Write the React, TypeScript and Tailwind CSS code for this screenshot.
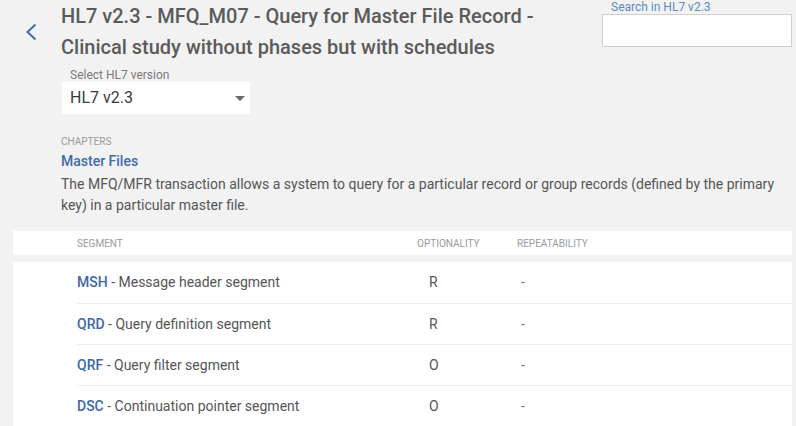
import { useState } from 'react';

type Segment = {
  code: string;
  name: string;
  optionality: string;
  repeatability: string;
};

const segments: Segment[] = [
  { code: 'MSH', name: 'Message header segment', optionality: 'R', repeatability: '-' },
  { code: 'QRD', name: 'Query definition segment', optionality: 'R', repeatability: '-' },
  { code: 'QRF', name: 'Query filter segment', optionality: 'O', repeatability: '-' },
  { code: 'DSC', name: 'Continuation pointer segment', optionality: 'O', repeatability: '-' },
];

export default function App() {
  const [version, setVersion] = useState('HL7 v2.3');
  const [query, setQuery] = useState('');

  return (
    <main className="min-h-screen w-full bg-[#f2f2f2] font-['Roboto',sans-serif] text-[#555]">
      <header className="flex items-start">
        <button className="ml-[25px] mt-[23px] w-[36px] shrink-0 text-[#3b6fb1]">
          <svg width="13" height="18" viewBox="0 0 13 18" fill="none">
            <path d="M10.5 1.5 L2.5 9 L10.5 16.5" stroke="currentColor" strokeWidth="2" />
          </svg>
        </button>

        <div className="w-[530px] shrink-0">
          <h1 className="pt-[1px] text-[20px] font-medium leading-[31px] text-[#5b5b5b]">
            HL7 v2.3 - MFQ_M07 - Query for Master File Record - Clinical study without phases but with schedules
          </h1>

          <div className="mt-[5px] ml-[1px]">
            <label className="block pl-[8px] text-[12px] leading-[14px] text-[#7a7a7a]">Select HL7 version</label>
            <div className="relative flex h-[32px] w-[188px] items-center bg-white pl-[8px]">
              <select
                value={version}
                onChange={(event) => setVersion(event.target.value)}
                className="w-full appearance-none bg-transparent text-[16px] text-[#3a3a3a] outline-none"
              >
                <option>HL7 v2.3</option>
                <option>HL7 v2.4</option>
                <option>HL7 v2.5</option>
              </select>
              <span className="pointer-events-none absolute right-[5px] top-[14px] h-0 w-0 border-x-[5px] border-t-[5px] border-x-transparent border-t-[#666]" />
            </div>
          </div>
        </div>

        <div className="ml-auto mr-[4px] w-[190px] pt-[1px]">
          <label className="block pl-[9px] text-[12px] leading-[13px] text-[#5a8ac8]">Search in HL7 v2.3</label>
          <input
            type="text"
            value={query}
            onChange={(event) => setQuery(event.target.value)}
            className="h-[33px] w-full border border-[#cfcfcf] bg-white px-2 text-[14px] outline-none"
          />
        </div>
      </header>

      <section className="mt-[22px] pl-[61px] pr-[4px]">
        <p className="text-[10px] uppercase leading-[12px] text-[#999]">Chapters</p>
        <h2 className="mt-[3px] text-[14px] font-medium leading-[20px] text-[#3d6cad]">Master Files</h2>
        <p className="mt-[3px] text-[14px] leading-[21px] text-[#555]">
          The MFQ/MFR transaction allows a system to query for a particular record or group records (defined by the
          primary key) in a particular master file.
        </p>
      </section>

      <section className="ml-[13px] mr-[4px] mt-[15px]">
        <div className="grid h-[24px] grid-cols-[340px_100px_1fr] items-center bg-white pl-[64px] text-[10px] uppercase text-[#9a9a9a]">
          <span>Segment</span>
          <span>Optionality</span>
          <span>Repeatability</span>
        </div>

        <div className="mt-[7px] bg-white pl-[64px]">
          {segments.map((segment, index) => (
            <div
              key={segment.code}
              className={`grid h-[41px] grid-cols-[340px_100px_1fr] items-center text-[14px] ${
                index > 0 ? 'border-t border-[#ececec]' : ''
              }`}
            >
              <span>
                <span className="font-medium text-[#3e68a5]">{segment.code}</span>
                <span className="text-[#555]"> - {segment.name}</span>
              </span>
              <span className="pl-[12px] text-[#555]">{segment.optionality}</span>
              <span className="pl-[4px] text-[#777]">{segment.repeatability}</span>
            </div>
          ))}
        </div>
      </section>
    </main>
  );
}
